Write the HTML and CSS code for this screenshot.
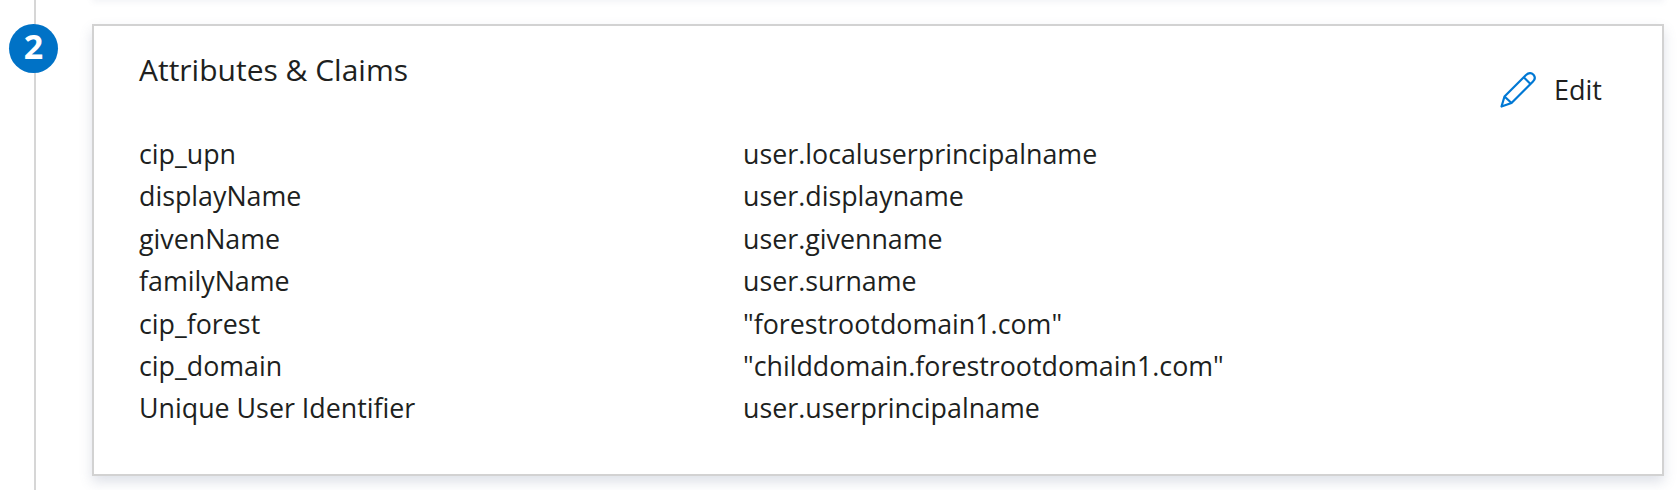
FILE: index.html
```html
<!DOCTYPE html>
<html lang="en">
<head>
<meta charset="utf-8">
<title>Attributes &amp; Claims</title>
<link rel="stylesheet" href="styles.css">
</head>
<body>
<div class="page">
  <div class="rail">
    <div class="badge">2</div>
  </div>
  <main class="main">
    <div class="prev-shadow"></div>
    <section class="card">
      <h2 class="title">Attributes &amp; Claims</h2>
      <button class="edit" type="button">
        <svg class="edit-icon" width="36" height="36" viewBox="0 0 36 36" fill="none" stroke="#0078d4" stroke-width="2.2" stroke-linejoin="round">
          <path d="M1.5 34.5 L4.5 24.5 L26 3 C28.5 .8 31.5 .8 33.5 2.8 C35.2 4.8 35 7.5 33 9.5 L11.5 31 Z"/>
          <path d="M4.5 24.5 L11.5 31"/>
          <path d="M24 5.5 L30.5 12"/>
        </svg>
        <span>Edit</span>
      </button>
      <dl class="rows">
        <dt>cip_upn</dt><dd>user.localuserprincipalname</dd>
        <dt>displayName</dt><dd>user.displayname</dd>
        <dt>givenName</dt><dd>user.givenname</dd>
        <dt>familyName</dt><dd>user.surname</dd>
        <dt>cip_forest</dt><dd>"forestrootdomain1.com"</dd>
        <dt>cip_domain</dt><dd>"childdomain.forestrootdomain1.com"</dd>
        <dt>Unique User Identifier</dt><dd>user.userprincipalname</dd>
      </dl>
    </section>
  </main>
</div>
</body>
</html>
```
FILE: styles.css
```css
* { box-sizing: border-box; }
html, body { margin: 0; height: 100%; background: #fff; }
body { overflow: hidden; font-family: "Open Sans", "Noto Sans", sans-serif; color: #201f1e; }
.page { display: flex; height: 490px; }
.rail {
  position: relative;
  width: 92px;
  flex: none;
}
.rail::before {
  content: "";
  position: absolute;
  left: 34px;
  top: 0;
  bottom: 0;
  width: 2px;
  background: #d6d6d6;
}
.badge {
  position: absolute;
  left: 9px;
  top: 24px;
  width: 49px;
  height: 49px;
  border-radius: 50%;
  background: #0072c6;
  color: #fff;
  font-size: 34px;
  font-weight: 700;
  line-height: 45px;
  text-align: center;
}
.main { flex: 1; padding: 24px 14px 0 0; position: relative; }
.prev-shadow {
  position: absolute;
  left: 0;
  right: 14px;
  top: -8px;
  height: 8px;
  box-shadow: 0 2px 6px rgba(90, 100, 140, .08);
}
.card {
  position: relative;
  height: 452px;
  border: 2px solid #d2d2d2;
  background: #fff;
  box-shadow: 0 6px 12px rgba(90, 105, 140, .2);
  padding: 26px 45px 0 45px;
}
.title {
  margin: 0;
  font-size: 30px;
  font-weight: 400;
  line-height: 36px;
}
.edit {
  position: absolute;
  right: 60px;
  top: 46px;
  display: flex;
  align-items: center;
  gap: 18px;
  padding: 0;
  border: 0;
  background: none;
  color: inherit;
  font: inherit;
  font-size: 27px;
  line-height: 36px;
}
.edit-icon { margin-top: -1px; }
.rows {
  margin: 45px 0 0;
  display: grid;
  grid-template-columns: 604px 1fr;
  font-size: 26.8px;
  line-height: 42.4px;
}
dd { margin: 0; }
dt { font-weight: 400; }
```
